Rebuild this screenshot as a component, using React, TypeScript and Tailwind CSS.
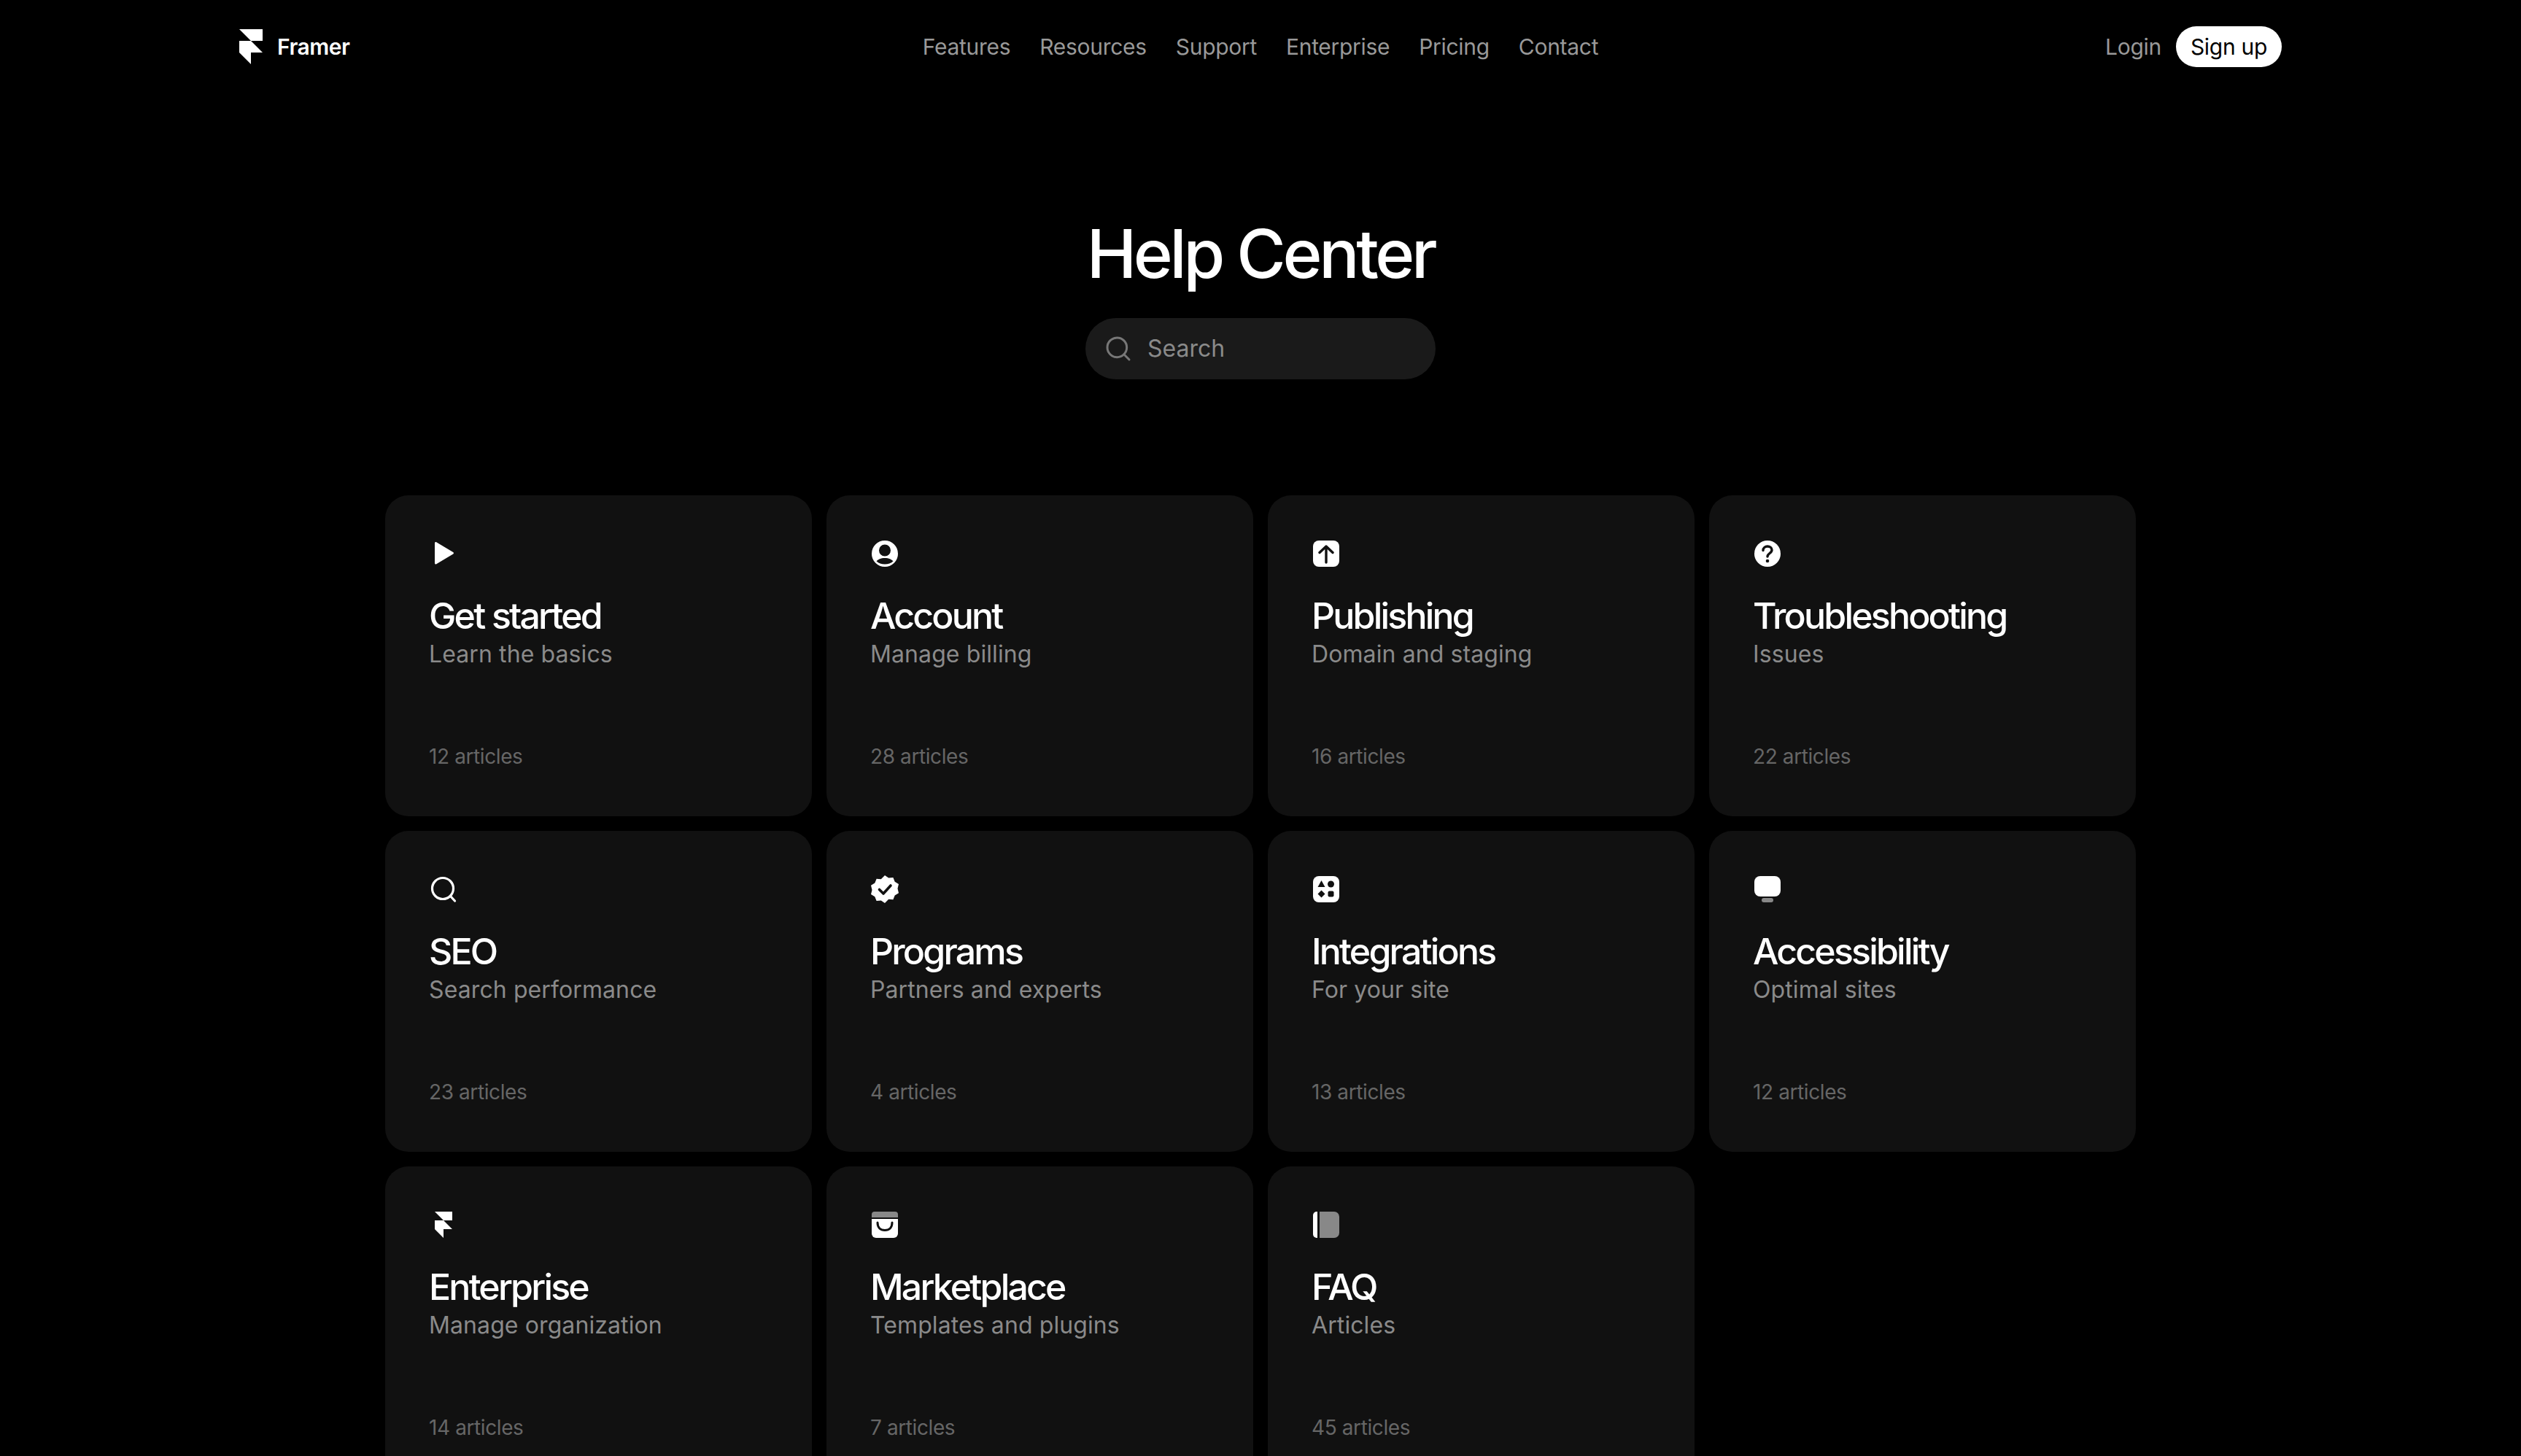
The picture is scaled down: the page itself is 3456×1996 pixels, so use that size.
import type { ReactNode } from "react";
import { Search } from "lucide-react";

const FramerMark = ({ className }: { className: string }) => (
  <svg viewBox="0 0 24 36" className={className} fill="currentColor">
    <path d="M0 0h24v12H12z" />
    <path d="M0 12h12l12 12H12v12L0 24z" />
  </svg>
);

const Icon = ({ children }: { children: ReactNode }) => (
  <svg viewBox="0 0 40 40" className="h-10 w-10 text-white" fill="currentColor">
    {children}
  </svg>
);

const icons: Record<string, ReactNode> = {
  play: (
    <Icon>
      <path d="M8 5.600c0-1.200 1.200-1.900 2.200-1.300l23 13.600c1 .6 1 2 0 2.600l-23 13.700c-1 .6-2.200-.1-2.200-1.300z" />
    </Icon>
  ),
  account: (
    <Icon>
      <path
        fillRule="evenodd"
        d="M20 2a18 18 0 1 1 0 36 18 18 0 0 1 0-36zm0 5.500a8 8 0 1 0 0 16 8 8 0 0 0 0-16zm0 18.500c-5.500 0-9.500 2-11.500 4.300 3 3 7 4.200 11.500 4.200s8.500-1.200 11.500-4.200c-2-2.300-6-4.300-11.500-4.300z"
      />
    </Icon>
  ),
  publish: (
    <Icon>
      <rect x="2" y="2" width="36" height="36" rx="8" />
      <path d="M20 32V10M11 18.500 20 10l9 8.500" fill="none" stroke="#111" strokeWidth="3.400" strokeLinecap="round" strokeLinejoin="round" />
    </Icon>
  ),
  help: (
    <Icon>
      <circle cx="20" cy="20" r="18" />
      <path d="M14 15.500c0-3.500 2.800-5.500 6-5.500s6 2 6 5c0 4.500-6 4.500-6 9" fill="none" stroke="#111" strokeWidth="3.400" strokeLinecap="round" />
      <circle cx="20" cy="30" r="2.300" fill="#111" />
    </Icon>
  ),
  search: (
    <Icon>
      <circle cx="19" cy="19" r="14.500" fill="none" stroke="currentColor" strokeWidth="3.200" />
      <path d="m29.500 29.500 6 6.500" fill="none" stroke="currentColor" strokeWidth="3.200" strokeLinecap="round" />
    </Icon>
  ),
  badge: (
    <Icon>
      <path d="M20 1l5.200 3.500 6.200-.5 2.300 5.800 5.300 3.200-1.500 6.100 1.500 6.100-5.300 3.200-2.300 5.800-6.200-.5L20 39l-5.200-3.500-6.200.5-2.300-5.800L1 27l1.500-6.100L1 14.800l5.300-3.200L8.600 5.800l6.200.5z" />
      <path d="m12.500 20.500 5.500 5.500 10-11" fill="none" stroke="#111" strokeWidth="3.600" strokeLinecap="round" strokeLinejoin="round" />
    </Icon>
  ),
  integrations: (
    <Icon>
      <rect x="2" y="2" width="36" height="36" rx="8" />
      <path d="M13.500 8l5 9h-10z" fill="#111" />
      <circle cx="26.500" cy="13" r="4.500" fill="#111" />
      <path d="M13.500 21.500l5 5-5 5-5-5z" fill="#111" />
      <rect x="22.500" y="22.500" width="8" height="8" rx="2" fill="#111" />
    </Icon>
  ),
  monitor: (
    <Icon>
      <rect x="2" y="2" width="36" height="28" rx="8" />
      <rect x="12" y="32" width="16" height="6" rx="3" fill="#888" />
    </Icon>
  ),
  framer: (
    <Icon>
      <g transform="translate(8 2)">
        <path d="M0 0h24v12H12z" />
        <path d="M0 12h12l12 12H12v12L0 24z" />
      </g>
    </Icon>
  ),
  store: (
    <Icon>
      <path d="M6 2h28a4 4 0 0 1 4 4v4H2V6a4 4 0 0 1 4-4z" fill="#888" />
      <path d="M2 12h36v20a6 6 0 0 1-6 6H8a6 6 0 0 1-6-6z" />
      <path d="M10 17c0 7 4 10.500 10 10.500S30 24 30 17" fill="none" stroke="#111" strokeWidth="3" strokeLinecap="round" />
    </Icon>
  ),
  book: (
    <Icon>
      <path d="M8 2v36H7a5 5 0 0 1-5-5V7a5 5 0 0 1 5-5z" />
      <path d="M11 2h20a7 7 0 0 1 7 7v22a7 7 0 0 1-7 7H11z" fill="#888" />
    </Icon>
  ),
};

const navLinks = ["Features", "Resources", "Support", "Enterprise", "Pricing", "Contact"];

const categories = [
  { icon: "play", title: "Get started", sub: "Learn the basics", count: "12 articles" },
  { icon: "account", title: "Account", sub: "Manage billing", count: "28 articles" },
  { icon: "publish", title: "Publishing", sub: "Domain and staging", count: "16 articles" },
  { icon: "help", title: "Troubleshooting", sub: "Issues", count: "22 articles" },
  { icon: "search", title: "SEO", sub: "Search performance", count: "23 articles" },
  { icon: "badge", title: "Programs", sub: "Partners and experts", count: "4 articles" },
  { icon: "integrations", title: "Integrations", sub: "For your site", count: "13 articles" },
  { icon: "monitor", title: "Accessibility", sub: "Optimal sites", count: "12 articles" },
  { icon: "framer", title: "Enterprise", sub: "Manage organization", count: "14 articles" },
  { icon: "store", title: "Marketplace", sub: "Templates and plugins", count: "7 articles" },
  { icon: "book", title: "FAQ", sub: "Articles", count: "45 articles" },
];

export default function App() {
  return (
    <div className="h-screen overflow-hidden bg-black text-white [font-family:Inter,sans-serif]">
      {/* Nav */}
      <header className="mx-auto grid h-32 w-[2800px] grid-cols-[1fr_auto_1fr] items-center">
        <div className="flex items-center gap-5">
          <FramerMark className="h-12 w-8 text-white" />
          <span className="text-[30px] leading-9 font-semibold tracking-[-0.5px]">Framer</span>
        </div>
        <nav className="flex gap-10 text-[30px] leading-9 tracking-[-0.3px] text-[#999]">
          {navLinks.map((link) => (
            <a key={link}>{link}</a>
          ))}
        </nav>
        <div className="flex items-center justify-end gap-5 text-[30px] leading-9 tracking-[-0.3px]">
          <a className="text-[#999]">Login</a>
          <a className="flex h-14 items-center rounded-full bg-white px-5 text-black">Sign up</a>
        </div>
      </header>

      {/* Hero */}
      <section className="mt-[170px] flex flex-col items-center">
        <h1 className="text-[92px] leading-[100px] font-medium tracking-[-4.3px]">Help Center</h1>
        <div className="mt-[38px] flex h-[84px] w-[480px] items-center gap-5 rounded-full bg-[#1a1a1a] pl-[25px] text-[32px] text-[#8a8a8a]">
          <Search className="h-10 w-10 text-[#777]" strokeWidth={1.8} />
          <span>Search</span>
        </div>
      </section>

      {/* Categories */}
      <main className="mx-auto mt-[159px] grid w-[2400px] grid-cols-4 gap-5">
        {categories.map((c) => (
          <div key={c.title} className="flex h-[440px] flex-col rounded-[32px] bg-[#111] px-[60px] pt-[60px] pb-16">
            {icons[c.icon]}
            <h2 className="mt-[37px] text-[50px] leading-14 font-medium tracking-[-2.8px]">{c.title}</h2>
            <p className="mt-[5px] text-[32px] leading-10 tracking-[0.1px] text-[#8a8a8a]">{c.sub}</p>
            <span className="mt-auto text-[28px] leading-9 tracking-[-0.4px] text-[#666]">{c.count}</span>
          </div>
        ))}
      </main>
    </div>
  );
}
